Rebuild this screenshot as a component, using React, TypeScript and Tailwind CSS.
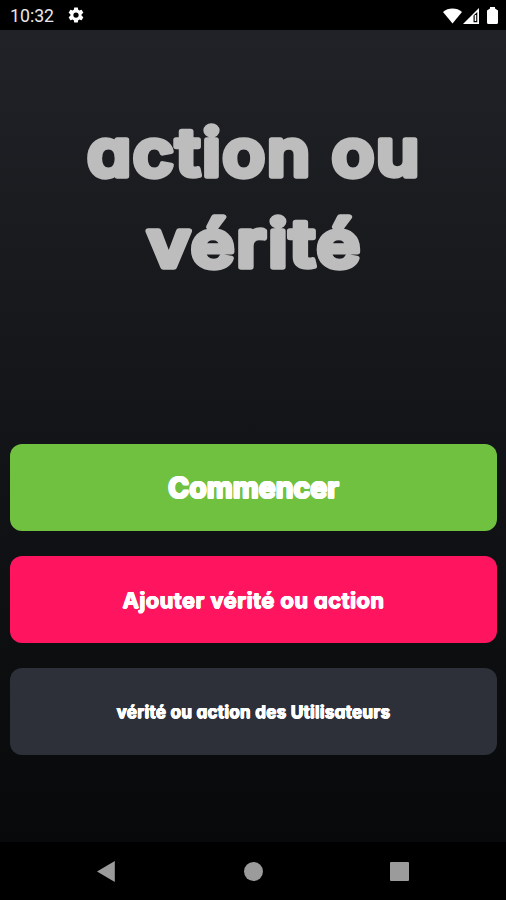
const rounded =
  "font-['Inter','Open_Sans',sans-serif] [font-feature-settings:'cv11','calt'] whitespace-nowrap";

// Rings of hard shadows thicken the button labels and round their corners.
const ringMedium =
  "[text-shadow:1.1px_0_#fff,0.8px_0.8px_#fff,0_1.1px_#fff,-0.8px_0.8px_#fff,-1.1px_0_#fff,-0.8px_-0.8px_#fff,0_-1.1px_#fff,0.8px_-0.8px_#fff]";
const ringSmall =
  "[text-shadow:0.6px_0_#fff,0_0.5px_#fff,-0.6px_0_#fff,0_-0.5px_#fff]";

function StatusBar() {
  return (
    <header className="flex h-[30px] shrink-0 items-center justify-between bg-black pl-[10px] pr-[8px] pt-[1px] text-[#e8e8e8]">
      <div className="flex items-center">
        <span className="w-[57px] pt-[2px] font-['Roboto',sans-serif] text-[17.7px] leading-none">10:32</span>
        <svg className="size-[18px]" viewBox="0 0 24 24" fill="#fff" aria-hidden="true">
          <path d="M19.43 12.98c.04-.32.07-.64.07-.98s-.03-.66-.07-.98l2.11-1.65c.19-.15.24-.42.12-.64l-2-3.46c-.12-.22-.39-.3-.61-.22l-2.49 1c-.52-.4-1.08-.73-1.69-.98l-.38-2.65A.49.49 0 0 0 14 2h-4c-.25 0-.46.18-.49.42l-.38 2.65c-.61.25-1.17.59-1.69.98l-2.49-1c-.23-.09-.49 0-.61.22l-2 3.46c-.13.22-.07.49.12.64l2.11 1.65c-.04.32-.07.65-.07.98s.03.66.07.98l-2.11 1.65c-.19.15-.24.42-.12.64l2 3.46c.12.22.39.3.61.22l2.49-1c.52.4 1.08.73 1.69.98l.38 2.65c.03.24.24.42.49.42h4c.25 0 .46-.18.49-.42l.38-2.65c.61-.25 1.17-.59 1.69-.98l2.49 1c.23.09.49 0 .61-.22l2-3.46c.12-.22.07-.49-.12-.64l-2.11-1.65zM12 15.5a3.5 3.5 0 1 1 0-7 3.5 3.5 0 0 1 0 7z" />
        </svg>
      </div>
      <div className="flex items-center">
        <svg className="h-[16px] w-[19px]" viewBox="0 0 19 16" fill="#fff" aria-hidden="true">
          <path d="M9.5 15.5 0 4C5-.6 14-.6 19 4Z" />
        </svg>
        <svg className="ml-[1px] h-[16px] w-[16px]" viewBox="0 0 16 16" fill="#fff" aria-hidden="true">
          <path fillRule="evenodd" d="M0 16 16 0V16ZM10.5 7.5V14.2H14.3V4Z" />
          <path d="M11.7 7h1.5v6h-1.5z" />
        </svg>
        <svg className="ml-[8px] h-[17px] w-[11px]" viewBox="0 0 11 17" fill="#fff" aria-hidden="true">
          <path d="M3 0H8V1.5L11 3.5V15.5Q11 17 9.5 17H1.5Q0 17 0 15.5V3.5L3 1.5Z" />
        </svg>
      </div>
    </header>
  );
}

// Wordmark with round-joined strokes around live text.
function Title() {
  return (
    <h1 className="flex h-[414px] justify-center pt-[70px]">
      <svg
        className={`${rounded} h-[190px] w-[370px] shrink-0 fill-[#bdbdbd] stroke-[#bdbdbd] stroke-[5.4px] text-[66px] font-semibold tracking-[1.6px] [stroke-linejoin:round]`}
        viewBox="70 100 370 190"
      >
        <text x="88" y="175.5" textLength="334" lengthAdjust="spacingAndGlyphs">action ou</text>
        <text x="148" y="266.5" textLength="215" lengthAdjust="spacingAndGlyphs">vérité</text>
      </svg>
    </h1>
  );
}

function NavigationBar() {
  return (
    <nav className="flex h-[58px] shrink-0 items-center bg-black pl-[97px]">
      <button aria-label="Retour" className="flex h-[21px] w-[18px]">
        <svg className="h-[21px] w-[18px]" viewBox="0 0 18 21" fill="#9b9b9b"><path d="M17.8 0V21L0 10.5Z" /></svg>
      </button>
      <button aria-label="Accueil" className="ml-[129px] size-[19px] rounded-full bg-[#9b9b9b]" />
      <button aria-label="Récents" className="ml-[127px] size-[19px] rounded-[1px] bg-[#9b9b9b]" />
    </nav>
  );
}

export default function App() {
  return (
    <div className="flex h-[900px] w-[506px] flex-col overflow-hidden bg-black">
      <StatusBar />
      <main className="flex flex-1 flex-col bg-linear-to-b from-[#212227] via-[#121417] to-[#08090a] pl-[10px] pr-[9px]">
        <Title />
        <div className={`${rounded} flex flex-col gap-[25px] font-bold text-white`}>
          <button className={`${ringMedium} h-[87px] rounded-[12px] bg-[#70c13f] pt-[2px] text-[28.5px]`}>Commencer</button>
          <button className={`${ringSmall} h-[87px] rounded-[12px] bg-[#ff145f] pt-[2px] text-[22px] tracking-[0.4px]`}>Ajouter vérité ou action</button>
          <button className={`${ringSmall} h-[87px] rounded-[12px] bg-[#2d3039] pt-[2px] text-[17px] tracking-[0.3px]`}>vérité ou action des Utilisateurs</button>
        </div>
      </main>
      <NavigationBar />
    </div>
  );
}
